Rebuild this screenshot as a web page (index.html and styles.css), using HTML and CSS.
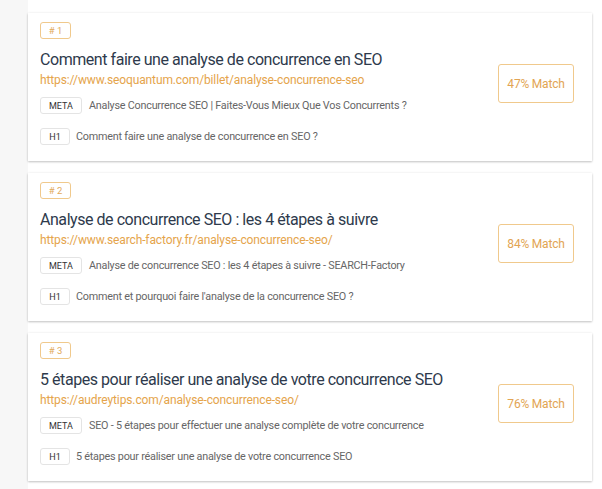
FILE: index.html
```html
<!DOCTYPE html>
<html lang="fr">
<head>
<meta charset="utf-8">
<title>Résultats</title>
<link rel="stylesheet" href="styles.css">
</head>
<body>
<div class="layout">
  <aside class="strip"></aside>
  <main class="list">
    <article class="card">
      <div class="info">
        <span class="rank"># 1</span>
        <h2 class="title">Comment faire une analyse de concurrence en SEO</h2>
        <a class="url" href="#">https://www.seoquantum.com/billet/analyse-concurrence-seo</a>
        <div class="row meta-row"><span class="tag tag-meta">META</span><span class="desc">Analyse Concurrence SEO | Faites-Vous Mieux Que Vos Concurrents ?</span></div>
        <div class="row h1-row"><span class="tag tag-h1">H1</span><span class="desc">Comment faire une analyse de concurrence en SEO ?</span></div>
      </div>
      <div class="match">47% Match</div>
    </article>
    <article class="card">
      <div class="info">
        <span class="rank"># 2</span>
        <h2 class="title">Analyse de concurrence SEO : les 4 étapes à suivre</h2>
        <a class="url" href="#">https://www.search-factory.fr/analyse-concurrence-seo/</a>
        <div class="row meta-row"><span class="tag tag-meta">META</span><span class="desc">Analyse de concurrence SEO : les 4 étapes à suivre - SEARCH-Factory</span></div>
        <div class="row h1-row"><span class="tag tag-h1">H1</span><span class="desc">Comment et pourquoi faire l'analyse de la concurrence SEO ?</span></div>
      </div>
      <div class="match">84% Match</div>
    </article>
    <article class="card">
      <div class="info">
        <span class="rank"># 3</span>
        <h2 class="title">5 étapes pour réaliser une analyse de votre concurrence SEO</h2>
        <a class="url" href="#">https://audreytips.com/analyse-concurrence-seo/</a>
        <div class="row meta-row"><span class="tag tag-meta">META</span><span class="desc">SEO - 5 étapes pour effectuer une analyse complète de votre concurrence</span></div>
        <div class="row h1-row"><span class="tag tag-h1">H1</span><span class="desc">5 étapes pour réaliser une analyse de votre concurrence SEO</span></div>
      </div>
      <div class="match">76% Match</div>
    </article>
  </main>
</div>
</body>
</html>
```
FILE: styles.css
```css
* { box-sizing: border-box; }
html, body { margin: 0; padding: 0; }
body {
  font-family: Roboto, "Liberation Sans", Arial, sans-serif;
  background: #ffffff;
  color: #333;
}
.layout {
  display: flex;
  min-height: 489px;
}
.strip {
  width: 28px;
  flex: none;
  background: #f7f7f7;
}
.list {
  width: 564px;
  padding-top: 13px;
  display: flex;
  flex-direction: column;
  gap: 12px;
}
.card {
  background: #fff;
  height: 148px;
  padding: 9px 18px 0 12px;
  display: flex;
  align-items: flex-start;
  box-shadow: 0 1px 2px rgba(0,0,0,0.22), 0 0 3px rgba(0,0,0,0.06);
}
.info {
  flex: 1;
  display: flex;
  flex-direction: column;
  align-items: flex-start;
}
.rank {
  display: inline-flex;
  align-items: center;
  justify-content: center;
  width: 31px;
  height: 17px;
  border: 1px solid #f0c98c;
  border-radius: 3px;
  font-size: 9.5px;
  color: #e2a95a;
}
.title {
  margin: 11px 0 0 0;
  font-size: 16px;
  line-height: 20px;
  letter-spacing: -0.45px;
  font-weight: 400;
  color: #2e3a4c;
}
.url {
  font-size: 12px;
  line-height: 16px;
  letter-spacing: -0.12px;
  color: #e5a44b;
  text-decoration: none;
  margin-top: 2px;
}
.row {
  display: flex;
  align-items: center;
}
.meta-row { margin-top: 9px; }
.h1-row { margin-top: 14px; }
.tag {
  display: inline-flex;
  align-items: center;
  justify-content: center;
  height: 17px;
  border: 1px solid #e4e4e4;
  border-radius: 3px;
  font-size: 9px;
  color: #333;
  flex: none;
}
.tag-meta { width: 42px; margin-right: 7px; }
.tag-h1 { width: 30px; margin-right: 6px; }
.desc {
  font-size: 10.8px;
  letter-spacing: -0.23px;
  color: #666;
  white-space: nowrap;
}
.match {
  flex: none;
  margin-top: 42px;
  width: 76px;
  height: 39px;
  border: 1px solid #f0c98c;
  border-radius: 3px;
  display: flex;
  align-items: center;
  justify-content: center;
  font-size: 12px;
  letter-spacing: -0.2px;
  color: #e2a453;
}
```
